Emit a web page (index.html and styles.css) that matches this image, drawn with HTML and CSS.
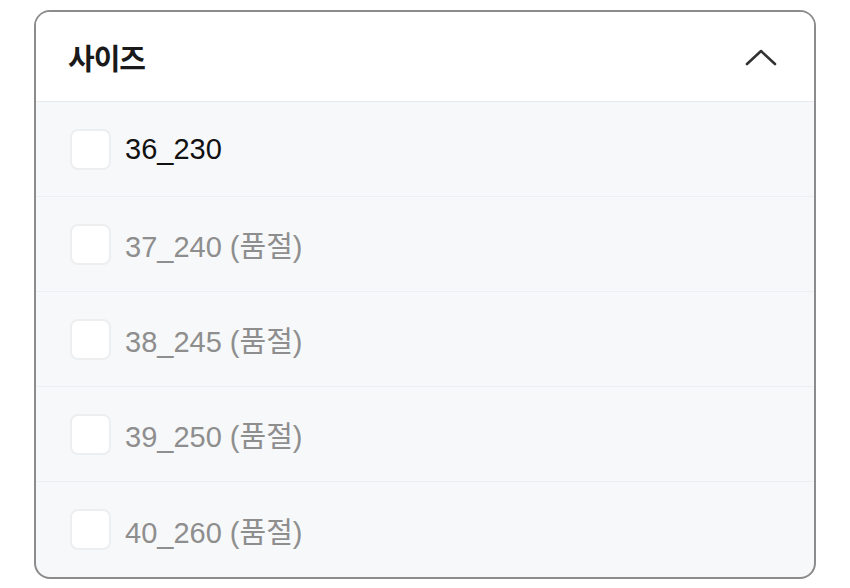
FILE: index.html
```html
<!DOCTYPE html>
<html lang="ko">
  <head>
    <meta charset="UTF-8" />
    <meta name="viewport" content="width=device-width, initial-scale=1.0" />
    <title>사이즈 필터</title>
    <link rel="stylesheet" href="styles.css">
  </head>
  <body>
    <div class="filter">
      <div class="filter__head">
        <h2 class="filter__title">사이즈</h2>
        <svg class="filter__toggle" width="34" height="20" viewBox="0 0 34 20" fill="none">
          <path d="M3 17 L17 4 L31 17" stroke="#333" stroke-width="2.6" stroke-linecap="round" stroke-linejoin="round" />
        </svg>
      </div>
      <ul class="filter__list">
        <li class="filter__item">
          <span class="filter__box"></span>
          <span class="filter__label">36_230</span>
        </li>
        <li class="filter__item filter__item--soldout">
          <span class="filter__box"></span>
          <span class="filter__label">37_240 (품절)</span>
        </li>
        <li class="filter__item filter__item--soldout">
          <span class="filter__box"></span>
          <span class="filter__label">38_245 (품절)</span>
        </li>
        <li class="filter__item filter__item--soldout">
          <span class="filter__box"></span>
          <span class="filter__label">39_250 (품절)</span>
        </li>
        <li class="filter__item filter__item--soldout">
          <span class="filter__box"></span>
          <span class="filter__label">40_260 (품절)</span>
        </li>
      </ul>
    </div>
  </body>
</html>
```

FILE: styles.css
```css
* {
  box-sizing: border-box;
  margin: 0;
  padding: 0;
}
body {
  background: #fff;
  padding: 10px 34px 0 34px;
  font-family: "Liberation Sans", "Noto Sans CJK KR", sans-serif;
  color: #111;
}
.filter {
  width: 782px;
  border: 2px solid #8c8c8c;
  border-radius: 16px;
  overflow: hidden;
  background: #f7f8fa;
}
.filter__head {
  display: flex;
  align-items: center;
  justify-content: space-between;
  height: 90px;
  padding: 0 36px 0 32px;
  background: #fff;
  border-bottom: 1px solid #e8eaed;
}
.filter__title {
  font-family: "Noto Sans CJK KR", sans-serif;
  font-size: 29px;
  font-weight: 700;
  letter-spacing: -1px;
  color: #1a1a1a;
}
.filter__list {
  list-style: none;
}
.filter__item {
  display: flex;
  align-items: center;
  gap: 14px;
  height: 95px;
  padding: 0 0 0 34px;
  border-bottom: 1px solid #edeff2;
}
.filter__item:last-child {
  border-bottom: 0;
}
.filter__box {
  width: 41px;
  height: 41px;
  border: 2px solid #eceef0;
  border-radius: 8px;
  background: #fff;
}
.filter__label {
  font-size: 29px;
  color: #111;
}
.filter__item--soldout .filter__label {
  color: #8e8e8e;
}
```
